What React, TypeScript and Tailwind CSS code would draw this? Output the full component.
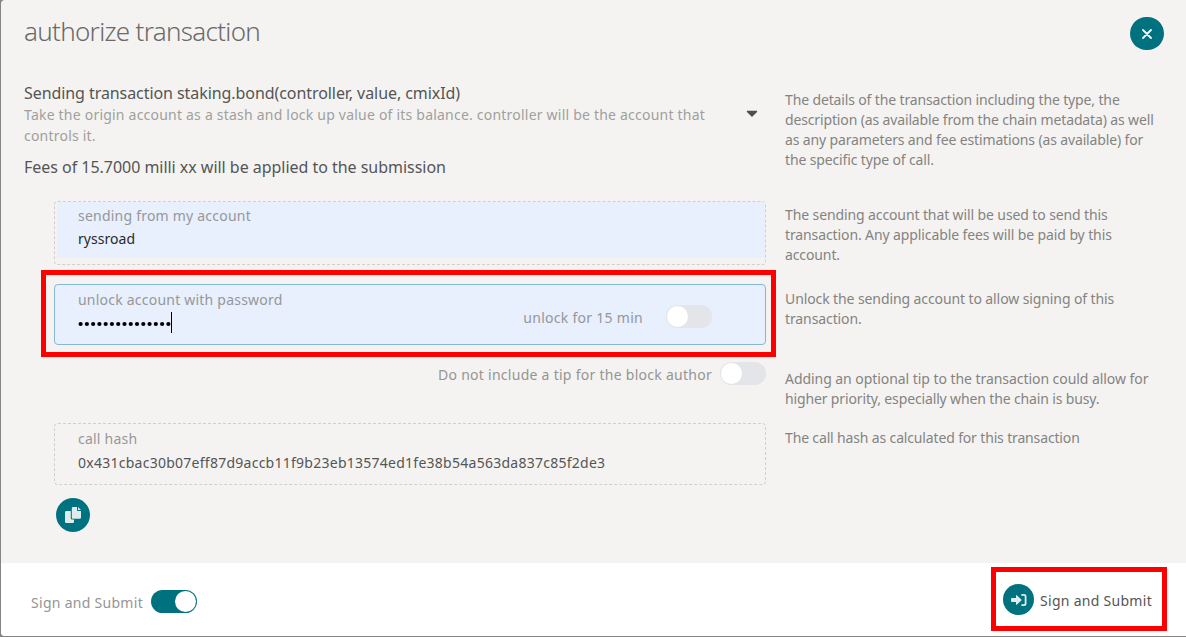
import type { ReactNode } from "react";
import { FaCaretDown } from "react-icons/fa";

function Toggle({ on = false }: { on?: boolean }) {
  return (
    <span
      className={
        on
          ? "flex h-[23px] w-[46px] shrink-0 items-center justify-end rounded-full bg-[#00727f] p-px"
          : "flex h-[23px] w-[46px] shrink-0 items-center rounded-full bg-[#e3e5e8] p-px"
      }
    >
      <span className="h-[21px] w-[21px] rounded-full bg-white" />
    </span>
  );
}

function Row({ children, hint, className }: { children: ReactNode; hint?: ReactNode; className: string }) {
  return (
    <div className={`flex ${className}`}>
      <div className="w-[765px] shrink-0 pl-[53px]">{children}</div>
      <div className="pl-[19px] text-[14px] leading-5 tracking-[-0.11px] whitespace-nowrap text-[#848382]">{hint}</div>
    </div>
  );
}

function Label({ children }: { children: ReactNode }) {
  return <div className="text-[14px] leading-[22px] tracking-[0.22px] text-[#96979b]">{children}</div>;
}

function CopyIcon() {
  return (
    <svg width="16" height="16" viewBox="0 0 16 16" fill="#e0ebeb">
      <path d="M1.2 4H5.8V11.2Q5.8 12.6 7.2 12.6H9V14.8Q9 16 7.8 16H1.2Q0 16 0 14.8V5.2Q0 4 1.2 4Z" />
      <path d="M8 0H12V3.2Q12 4 12.8 4H16V10.6Q16 11.8 14.8 11.8H8Q6.8 11.8 6.8 10.6V1.2Q6.8 0 8 0Z" />
      <path d="M13 0L16 3H13Z" />
    </svg>
  );
}

function SignInIcon() {
  return (
    <svg width="16" height="14" viewBox="0 0 16 14" fill="#e0ebeb">
      <path d="M0.9 5H5V2.9Q5 1.6 6 2.4L10.3 6.4Q10.9 7 10.3 7.6L6 11.6Q5 12.4 5 11.1V9H0.9Q0 9 0 8.1V5.9Q0 5 0.9 5Z" />
      <path
        d="M11 1.9H13Q14.6 1.9 14.6 3.5V10.5Q14.6 12.1 13 12.1H11"
        fill="none"
        stroke="#e0ebeb"
        strokeWidth="1.8"
        strokeLinecap="round"
      />
    </svg>
  );
}

export default function App() {
  return (
    <div className="h-[637px] w-[1186px] overflow-hidden bg-[#858585] pb-px pl-px font-['Noto_Sans',sans-serif]">
      <div className="flex h-[636px] flex-col overflow-hidden rounded-l-[4px] bg-[#f4f3f1]">
        <header className="flex h-[82px] justify-between pt-3 pr-[22px] pl-[23px]">
          <h1 className="text-[26px] leading-[38px] font-light tracking-[-0.7px] text-[#6a6a6a]">
            authorize transaction
          </h1>
          <button className="mt-[5px] flex h-[33px] w-[34px] items-center justify-center rounded-full bg-[#00727f]">
            <svg width="10" height="10" viewBox="0 0 10 10" fill="none" stroke="#f4f8f8" strokeWidth="1.8" strokeLinecap="round">
              <path d="M1 1L9 9M9 1L1 9" />
            </svg>
          </button>
        </header>

        <div className="flex h-[119px]">
          <div className="flex w-[765px] shrink-0 pl-[23px]">
            <div className="w-[715px] whitespace-nowrap">
              <div className="text-[16px] leading-[22px] tracking-[-0.072px] text-[#555]">
                Sending transaction staking.bond(controller, value, cmixId)
              </div>
              <div className="text-[14px] leading-[21px] tracking-[0.214px] text-[#a09f9e]">
                Take the origin account as a stash and lock up value of its balance. controller will be the account that
                <br />
                controls it.
              </div>
              <div className="mt-[9px] text-[16px] leading-[24px] tracking-[-0.03px] text-[#555]">
                Fees of 15.7000 milli xx will be applied to the submission
              </div>
            </div>
            <FaCaretDown size={18} className="mt-[22px] ml-1 text-[#4e4e4e]" />
          </div>
          <div className="pt-2 pl-[19px] text-[14px] leading-5 tracking-[-0.14px] whitespace-nowrap text-[#848382]">
            The details of the transaction including the type, the
            <br />
            description (as available from the chain metadata) as well
            <br />
            as any parameters and fee estimations (as available) for
            <br />
            the specific type of call.
          </div>
        </div>

        <Row
          className="h-[69px]"
          hint={
            <div className="pt-1">
              The sending account that will be used to send this
              <br />
              transaction. Any applicable fees will be paid by this
              <br />
              account.
            </div>
          }
        >
          <div className="h-16 rounded-[4px] border border-dashed border-[#d0cfce] pl-0.5">
            <div className="h-14 bg-[#e8effd] pt-[3px] pl-[21px]">
              <Label>sending from my account</Label>
              <div className="mt-px text-[14px] leading-[22px] tracking-[0.05px] text-[#2a2a2a]">ryssroad</div>
            </div>
          </div>
        </Row>

        <div className="flex h-[87px]">
          <div className="ml-10 w-[735px] shrink-0 border-[5px] border-[#fe0000] py-[9px] pr-[5px] pl-2">
            <div className="flex h-[61px] rounded-[4px] border border-[#85b7d9] bg-[#e8effd] pt-1 pr-[53px] pl-[23px]">
              <div className="flex-1">
                <Label>unlock account with password</Label>
                <div className="flex h-[22px] items-center">
                  <svg width="93" height="6" viewBox="0 0 93 6" className="mt-1 fill-black">
                    {Array.from({ length: 15 }, (_, i) => (
                      <circle key={i} cx={2.6 + i * 6.27} cy="3" r="2.1" />
                    ))}
                  </svg>
                  <span className="h-[21px] w-px bg-black" />
                </div>
              </div>
              <div className="mt-4 flex h-[23px] items-center gap-[23px] self-start">
                <span className="pt-0.5 text-[14px] leading-[22px] tracking-[0.28px] text-[#96979b]">unlock for 15 min</span>
                <Toggle />
              </div>
            </div>
          </div>
          <div className="pt-[19px] pl-[9px] text-[14px] leading-5 tracking-[-0.1px] whitespace-nowrap text-[#848382]">
            Unlock the sending account to allow signing of this
            <br />
            transaction.
          </div>
        </div>

        <Row
          className="h-[66px] pt-[5px]"
          hint={
            <div className="pt-[7px]">
              <span className="tracking-[-0.055px]">Adding an optional tip to the transaction could allow for</span>
              <br />
              <span className="tracking-[-0.14px]">higher priority, especially when the chain is busy.</span>
            </div>
          }
        >
          <div className="flex h-[23px] items-start justify-end gap-2">
            <span className="pt-px text-[14px] leading-[23px] tracking-[0.27px] text-[#969594]">
              Do not include a tip for the block author
            </span>
            <Toggle />
          </div>
        </Row>

        <Row
          className="h-[75px]"
          hint={<div className="pt-[5px] tracking-[-0.15px]">The call hash as calculated for this transaction</div>}
        >
          <div className="h-[62px] rounded-[4px] border border-dashed border-[#d0cfce] pt-1 pl-[23px]">
            <Label>call hash</Label>
            <div className="mt-0.5 text-[14px] leading-[22px] tracking-[0.257px] text-[#555]">
              0x431cbac30b07eff87d9accb11f9b23eb13574ed1fe38b54a563da837c85f2de3
            </div>
          </div>
        </Row>

        <div className="h-[65px] pl-[55px]">
          <button className="flex h-[34px] w-[34px] items-center justify-center rounded-full bg-[#00727f]">
            <CopyIcon />
          </button>
        </div>

        <footer className="flex flex-1 items-start justify-between bg-white pt-1 pr-[19px] pl-[30px]">
          <div className="mt-[23px] flex h-[23px] items-start gap-2">
            <span className="pt-px text-[14px] leading-[23px] tracking-[0.289px] text-[#969594]">Sign and Submit</span>
            <Toggle on />
          </div>
          <div className="flex h-[64px] w-[176px] items-center gap-[6px] border-[5px] border-[#fe0000] pt-px pl-[7px]">
            <span className="flex h-[31px] w-[31px] shrink-0 items-center justify-center rounded-full bg-[#00727f]">
              <SignInIcon />
            </span>
            <span className="pt-0.5 text-[14px] leading-[22px] tracking-[0.289px] whitespace-nowrap text-[#555]">
              Sign and Submit
            </span>
          </div>
        </footer>
      </div>
    </div>
  );
}
